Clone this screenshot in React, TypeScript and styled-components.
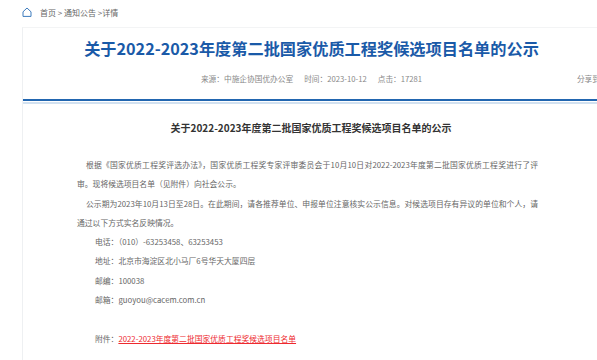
import React from 'react';
import styled, { createGlobalStyle } from 'styled-components';

const GlobalStyle = createGlobalStyle`
  html, body {
    margin: 0;
    padding: 0;
    background: #fff;
    overflow-x: hidden;
  }
  body {
    font-family: "Noto Sans CJK SC", "Noto Sans", sans-serif;
  }
`;

const Page = styled.div`
  width: 597px;
  padding-left: 22px;
  box-sizing: border-box;
`;

const Crumbs = styled.div`
  height: 27px;
  display: flex;
  align-items: center;
  gap: 8px;
  font-size: 8px;
  color: #666;
  padding-bottom: 3px;
  box-sizing: border-box;
`;

const HomeIcon = styled.svg`
  width: 10px;
  height: 10px;
  flex: none;
`;

const Panel = styled.div`
  width: 577px;
  border-left: 1px solid #eef0f2;
  border-top: 1px solid #f3f4f5;
  min-height: 340px;
`;

const Header = styled.div`
  padding-top: 8px;
  border-bottom: 2px solid #2266b0;
`;

const Title = styled.h1`
  margin: 0;
  font-size: 16.2px;
  line-height: 24px;
  font-weight: bold;
  color: #1a5aa8;
  text-align: center;
`;

const MetaRow = styled.div`
  display: grid;
  grid-template-columns: 1fr auto 1fr;
  align-items: center;
  margin-top: 12px;
  height: 12px;
  padding-bottom: 15px;
  font-size: 7.7px;
  color: #888;
`;

const Meta = styled.div`
  grid-column: 2;
  display: flex;
  gap: 11px;
`;

const Share = styled.span`
  justify-self: end;
  margin-right: 0;
  white-space: nowrap;
`;

const Rule = styled.div`
  margin-top: 1px;
  height: 2px;
  background: #d2e1f0;
`;

const Content = styled.div`
  padding: 14px 0 0 54px;
  width: 461px;
  font-size: 7.8px;
  color: #666;
`;

const SubTitle = styled.h2`
  margin: 0 0 17px -54px;
  width: 576px;
  font-size: 10px;
  line-height: 20px;
  font-weight: bold;
  color: #333;
  text-align: center;
`;

const Para = styled.p<{ $indent?: number; $gap?: boolean }>`
  margin: 0;
  line-height: 19.3px;
  text-align: justify;
  text-indent: ${p => p.$indent ?? 0}px;
  padding-left: ${p => (p.$gap ? 18 : 0)}px;
`;

const Blank = styled.div`
  height: 19.3px;
`;

const Attach = styled.a`
  color: #ee2a2f;
  text-decoration: underline;
`;

const contacts = [
  '电话：（010）-63253458、63253453',
  '地址：北京市海淀区北小马厂6号华天大厦四层',
  '邮编：100038',
  '邮箱：guoyou@cacem.com.cn',
];

export default function App() {
  return (
    <Page>
      <GlobalStyle />
      <Crumbs>
        <HomeIcon viewBox="0 0 10 10">
          <polygon points="1,4.8 5,1 9,4.8 9,9.4 1,9.4" fill="none" stroke="#3d7bbd" strokeWidth="1" strokeLinejoin="round" />
        </HomeIcon>
        <span>首页 &gt; 通知公告 &gt;详情</span>
      </Crumbs>
      <Panel>
        <Header>
          <Title>关于2022-2023年度第二批国家优质工程奖候选项目名单的公示</Title>
          <MetaRow>
            <Meta>
              <span>来源：中施企协国优办公室</span>
              <span>时间：2023-10-12</span>
              <span>点击：17281</span>
            </Meta>
            <Share>分享到</Share>
          </MetaRow>
        </Header>
        <Rule />
        <Content>
          <SubTitle>关于2022-2023年度第二批国家优质工程奖候选项目名单的公示</SubTitle>
          <Para $indent={9}>
            根据《国家优质工程奖评选办法》，国家优质工程奖专家评审委员会于10月10日对2022-2023年度第二批国家优质工程奖进行了评审。现将候选项目名单（见附件）向社会公示。
          </Para>
          <Para $indent={9}>
            公示期为2023年10月13日至28日。在此期间，请各推荐单位、申报单位注意核实公示信息。对候选项目存有异议的单位和个人，请通过以下方式实名反映情况。
          </Para>
          {contacts.map(c => (
            <Para key={c} $gap>{c}</Para>
          ))}
          <Blank />
          <Para $gap>
            附件：<Attach href="#">2022-2023年度第二批国家优质工程奖候选项目名单</Attach>
          </Para>
        </Content>
      </Panel>
    </Page>
  );
}
